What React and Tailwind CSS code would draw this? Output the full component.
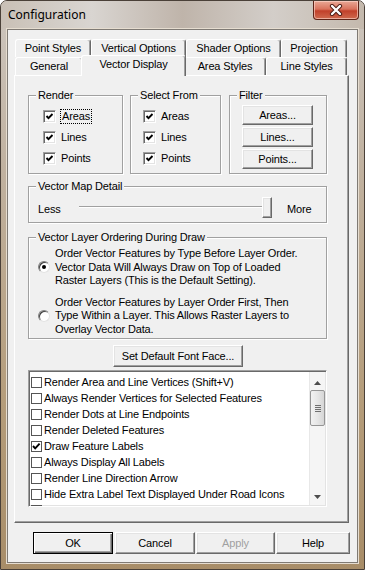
import React from 'react';

const raised =
  'bg-[#f0f0f0] border border-t-white border-l-white border-r-[#696969] border-b-[#696969] shadow-[inset_-1px_-1px_0_#a0a0a0,inset_1px_1px_0_#e3e3e3]';

function Check({ checked }) {
  return (
    <div className="w-[13px] h-[13px] shrink-0 bg-white border border-t-[#a0a0a0] border-l-[#a0a0a0] border-r-white border-b-white shadow-[inset_1px_1px_0_#696969,inset_-1px_-1px_0_#e3e3e3] flex items-center justify-center">
      {checked && (
        <svg width="9" height="9" viewBox="0 0 9 9">
          <polyline points="1.5,4 3.5,6.2 7.5,2" fill="none" stroke="#000" strokeWidth="1.9" />
        </svg>
      )}
    </div>
  );
}

function ListCheck({ checked }) {
  return (
    <div className="w-[11px] h-[11px] shrink-0 bg-white border border-[#555] flex items-center justify-center">
      {checked && (
        <svg width="9" height="9" viewBox="0 0 9 9">
          <polyline points="1,4 3.2,6.4 7.6,1.6" fill="none" stroke="#000" strokeWidth="1.9" />
        </svg>
      )}
    </div>
  );
}

function Radio({ checked }) {
  return (
    <div className="w-[12px] h-[12px] shrink-0 rounded-full bg-white border border-t-[#808080] border-l-[#808080] border-r-[#e3e3e3] border-b-[#e3e3e3] shadow-[inset_1px_1px_0_#404040] flex items-center justify-center">
      {checked && <div className="w-[4px] h-[4px] rounded-full bg-black" />}
    </div>
  );
}

function Group({ label, className, children }) {
  return (
    <div className={'relative border border-[#a0a0a0] shadow-[inset_1px_1px_0_#fff,1px_1px_0_#fff] ' + className}>
      <span className="absolute left-[7px] -top-[8px] px-[2px] bg-[#f0f0f0] leading-[14px]">{label}</span>
      {children}
    </div>
  );
}

function Tab({ label, w, selected }) {
  return (
    <div
      style={{ width: w }}
      className={
        'shrink-0 flex items-center justify-center bg-[#f0f0f0] border-t border-l border-white border-r border-r-[#696969] shadow-[inset_-1px_0_0_#a0a0a0] rounded-t-[3px] ' +
        (selected ? 'relative z-10 -mx-[2px] -mt-[2px] h-[21px] pb-[3px]' : 'h-[18px]')
      }
    >
      {label}
    </div>
  );
}

const listItems = [
  ['Render Area and Line Vertices (Shift+V)', false],
  ['Always Render Vertices for Selected Features', false],
  ['Render Dots at Line Endpoints', false],
  ['Render Deleted Features', false],
  ['Draw Feature Labels', true],
  ['Always Display All Labels', false],
  ['Render Line Direction Arrow', false],
  ['Hide Extra Label Text Displayed Under Road Icons', false],
  ['Only Highlight Border of Selected Area Features', false],
];

export default function App() {
  return (
    <div className="w-[365px] h-[570px] flex flex-col rounded-t-[7px] border border-[#4a4038] bg-[linear-gradient(180deg,#cdc6bf_0%,#c0b19f_30%,#b59d7b_70%,#a88d68_100%)] text-[11px] tracking-[-0.15px] text-black font-['Liberation_Sans',Arial,sans-serif] overflow-hidden">
      {/* title bar */}
      <div className="h-[28px] flex justify-between bg-[linear-gradient(90deg,#c9c0b6,#d9d5d1_25%,#bfb4aa_50%,#d3cec9_75%,#c4b9ad)]">
        <span className="self-center pl-[7px] text-[12px] tracking-normal font-['Noto_Sans',sans-serif]">Configuration</span>
        <div className="mr-[5px] w-[46px] h-[19px] rounded-b-[4px] border border-t-0 border-[#5e2418] bg-[linear-gradient(180deg,#e9a896_0%,#d9735d_45%,#c1402a_55%,#cf6a4f_100%)] shadow-[inset_0_0_0_1px_rgba(255,220,210,0.6)] flex items-center justify-center">
          <svg width="14" height="12" viewBox="0 0 14 12">
            <path d="M3 2 L11 10 M11 2 L3 10" stroke="#4a1a12" strokeWidth="4.2" strokeLinecap="round" />
            <path d="M3 2 L11 10 M11 2 L3 10" stroke="#fff" strokeWidth="2.4" strokeLinecap="round" />
          </svg>
        </div>
      </div>

      {/* client */}
      <div className="mx-[6px] mb-[6px] flex-1 bg-[#f0f0f0] border border-[#7f7a74] shadow-[0_0_0_1px_#e6ddd0]">
        {/* tabs */}
        <div className="ml-[7px] pt-[9px] w-[332px]">
          <div className="flex">
            <Tab label="Point Styles" w={76} />
            <Tab label="Vertical Options" w={95} />
            <Tab label="Shader Options" w={95} />
            <Tab label="Projection" w={66} />
          </div>
          <div className="flex h-[18px]">
            <Tab label="General" w={68} />
            <Tab label="Vector Display" w={105} selected />
            <Tab label="Area Styles" w={82} />
            <Tab label="Line Styles" w={81} />
          </div>
        </div>

        {/* tab page */}
        <div className="ml-[6px] w-[335px] h-[448px] border border-t-white border-l-white border-r-[#696969] border-b-[#696969] shadow-[inset_-1px_-1px_0_#a0a0a0] pl-[13px] flex flex-col">
          <div className="mt-[19px] flex">
            <Group label="Render" className="w-[95px] h-[79px]">
              <div className="pt-[10px] pl-[14px] flex flex-col">
                <div className="h-[21px] flex items-center">
                  <Check checked />
                  <span className="ml-[4px] px-[1px] border border-dotted border-black leading-[13px]">Areas</span>
                </div>
                <div className="h-[21px] flex items-center">
                  <Check checked />
                  <span className="ml-[5px]">Lines</span>
                </div>
                <div className="h-[21px] flex items-center">
                  <Check checked />
                  <span className="ml-[5px]">Points</span>
                </div>
              </div>
            </Group>
            <Group label="Select From" className="ml-[7px] w-[91px] h-[79px]">
              <div className="pt-[10px] pl-[12px] flex flex-col">
                {['Areas', 'Lines', 'Points'].map((t) => (
                  <div key={t} className="h-[21px] flex items-center">
                    <Check checked />
                    <span className="ml-[5px]">{t}</span>
                  </div>
                ))}
              </div>
            </Group>
            <Group label="Filter" className="ml-[8px] w-[98px] h-[79px]">
              <div className="pt-[9px] pl-[12px] flex flex-col gap-[2px]">
                {['Areas...', 'Lines...', 'Points...'].map((t) => (
                  <div key={t} className={'w-[71px] h-[20px] flex items-center justify-center ' + raised}>
                    {t}
                  </div>
                ))}
              </div>
            </Group>
          </div>

          <Group label="Vector Map Detail" className="mt-[12px] w-[299px] h-[37px]">
            <div className="pt-[10px] pl-[9px] flex items-center h-[31px]">
              <span className="w-[41px] pt-[3px]">Less</span>
              <div className="relative w-[193px] h-[21px]">
                <div className="absolute left-0 right-[1px] top-[9px] h-[2px] border-t border-[#a0a0a0] bg-white" />
                <div className={'absolute right-0 top-0 w-[10px] h-[21px] ' + raised} />
              </div>
              <span className="ml-[15px] pt-[3px]">More</span>
            </div>
          </Group>

          <Group label="Vector Layer Ordering During Draw" className="mt-[14px] w-[299px] h-[102px]">
            <div className="pt-[9px] pl-[9px] flex flex-col leading-[13.5px]">
              <div className="flex items-center">
                <Radio checked />
                <span className="ml-[5px] whitespace-nowrap">
                  Order Vector Features by Type Before Layer Order.
                  <br />
                  Vector Data Will Always Draw on Top of Loaded
                  <br />
                  Raster Layers (This is the Default Setting).
                </span>
              </div>
              <div className="mt-[8px] flex items-center">
                <Radio />
                <span className="ml-[5px] whitespace-nowrap">
                  Order Vector Features by Layer Order First, Then
                  <br />
                  Type Within a Layer. This Allows Raster Layers to
                  <br />
                  Overlay Vector Data.
                </span>
              </div>
            </div>
          </Group>

          <div className={'mt-[6px] ml-[85px] w-[130px] h-[22px] flex items-center justify-center ' + raised}>
            Set Default Font Face...
          </div>

          <div className="mt-[3px] w-[299px] h-[137px] flex bg-white border border-t-[#a0a0a0] border-l-[#a0a0a0] border-r-white border-b-white shadow-[inset_1px_1px_0_#696969,inset_-1px_-1px_0_#e3e3e3] overflow-hidden">
            <div className="flex-1 pt-[3px] pl-[2px] flex flex-col overflow-hidden">
              {listItems.map(([t, c]) => (
                <div key={t} className="h-[16px] shrink-0 flex items-center whitespace-nowrap">
                  <ListCheck checked={c} />
                  <span className="ml-[2px]">{t}</span>
                </div>
              ))}
            </div>
            <div className="w-[16px] mt-[1px] mb-[1px] mr-[1px] bg-[#f5f5f5] border-l border-[#e8e8e8] flex flex-col items-center">
              <svg className="mt-[9px]" width="7" height="4" viewBox="0 0 7 4">
                <polygon points="0,4 3.5,0 7,4" fill="#4d4d4d" />
              </svg>
              <div className="mt-[5px] w-[15px] h-[36px] rounded-[2px] border border-[#959595] bg-[linear-gradient(90deg,#f2f2f2,#e6e6e6_50%,#d6d6d6)] flex flex-col items-center justify-center gap-[1px]">
                <div className="w-[6px] h-[1px] bg-[#6f6f6f]" />
                <div className="w-[6px] h-[1px] bg-[#6f6f6f]" />
                <div className="w-[6px] h-[1px] bg-[#6f6f6f]" />
                <div className="w-[6px] h-[1px] bg-[#6f6f6f]" />
              </div>
              <div className="flex-1" />
              <svg className="mb-[6px]" width="7" height="4" viewBox="0 0 7 4">
                <polygon points="0,0 7,0 3.5,4" fill="#4d4d4d" />
              </svg>
            </div>
          </div>
        </div>

        {/* dialog buttons */}
        <div className="mt-[9px] ml-[25px] flex">
          <div className="w-[80px] h-[22px] flex items-center justify-center bg-[#f0f0f0] border border-black shadow-[inset_1px_1px_0_#fff,inset_-1px_-1px_0_#696969,inset_-2px_-2px_0_#a0a0a0]">
            OK
          </div>
          <div className={'ml-[2px] w-[80px] h-[22px] flex items-center justify-center ' + raised}>Cancel</div>
          <div className={'ml-[1px] w-[79px] h-[22px] flex items-center justify-center text-[#a0a0a0] ' + raised}>Apply</div>
          <div className={'ml-[1px] w-[74px] h-[22px] flex items-center justify-center ' + raised}>Help</div>
        </div>
      </div>
    </div>
  );
}
